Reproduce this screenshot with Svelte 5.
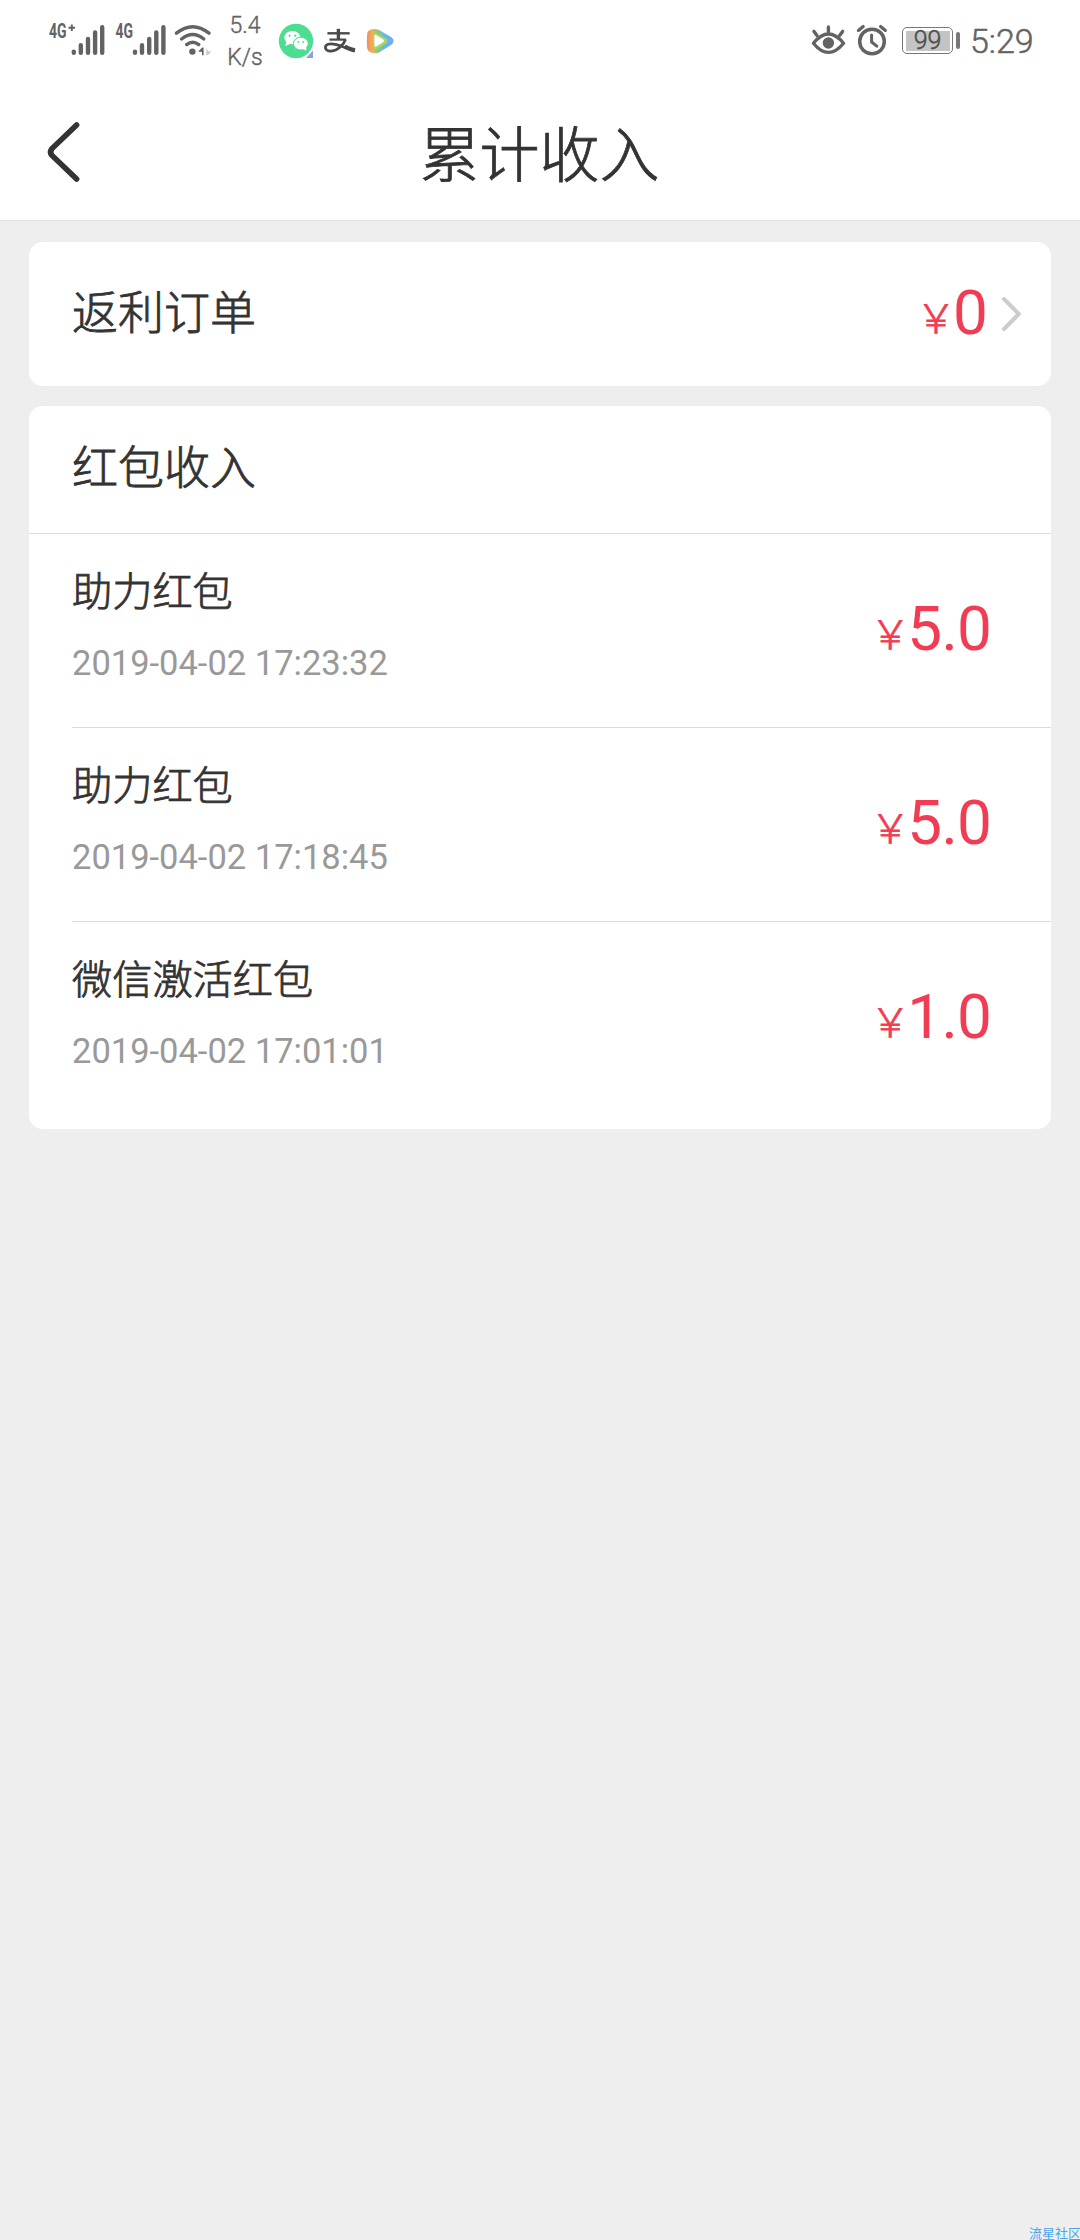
<script>
  const records = [
    { title: '助力红包', time: '2019-04-02 17:23:32', amount: '5.0' },
    { title: '助力红包', time: '2019-04-02 17:18:45', amount: '5.0' },
    { title: '微信激活红包', time: '2019-04-02 17:01:01', amount: '1.0' }
  ];
</script>

<div class="screen">
  <div class="status">
    <svg class="signals" width="166" height="80" viewBox="48 0 166 80">
      <g fill="#636363" class="net">
        <text x="49" y="38" textLength="17.5" lengthAdjust="spacingAndGlyphs">4G</text>
        <text x="115.5" y="38" textLength="17.5" lengthAdjust="spacingAndGlyphs">4G</text>
      </g>
      <path d="M68.5 27.7h6.6M71.8 24.4v6.6" stroke="#636363" stroke-width="2" />
      <g stroke="#636363" stroke-width="4.4" stroke-linecap="round" fill="none">
        <path d="M73.8 51.6v1.2M80.8 45.2v7.6M88 39v13.8M95.1 32.4v20.4M102.2 27.2v25.6" />
        <path d="M135 51.6v1.2M142 45.2v7.6M149.2 39v13.8M156.3 32.4v20.4M163.4 27.2v25.6" />
      </g>
      <g stroke="#636363" stroke-width="3.4" stroke-linecap="round" fill="none">
        <path d="M176.4 33.2Q192.7 20.2 209 33.2" />
        <path d="M181.6 39Q192.7 30 203.8 39" />
        <path d="M186.6 44.6Q192.7 40 198.8 44.6" />
      </g>
      <circle cx="192.4" cy="51.6" r="3.2" fill="#636363" />
      <path d="M198.2 51.5l4-4h1.4v7.8h-1.6v-3.2z" fill="#636363" />
      <path d="M206.4 47.4v7.8l1.6-.2 3.2-3.8-3.2.2z" fill="#c4c4c4" />
    </svg>
    <div class="speed"><span>5.4</span><span>K/s</span></div>
    <svg class="apps" width="120" height="80" viewBox="277 0 120 80">
      <defs>
        <linearGradient id="playEdge" x1="0" y1="0" x2="1" y2="0">
          <stop offset="0" stop-color="#f58b62" />
          <stop offset=".2" stop-color="#efae55" />
          <stop offset=".45" stop-color="#82c985" />
          <stop offset=".65" stop-color="#66b6ee" />
          <stop offset="1" stop-color="#72aaf1" />
        </linearGradient>
      </defs>
      <circle cx="296" cy="41" r="17.2" fill="#4cdd91" />
      <path d="M306 58l7-7.4v7.4z" fill="#8f9fe0" />
      <ellipse cx="292.3" cy="37.6" rx="8" ry="6.7" fill="#fff" />
      <path d="M286.3 41.5l-.9 4.5 4.6-2z" fill="#fff" />
      <ellipse cx="300.8" cy="43.6" rx="7.5" ry="6.4" fill="#fff" stroke="#4cdd91" stroke-width="1" />
      <path d="M302 48.8l4.6 1.7-.8-4z" fill="#fff" />
      <g fill="#4cdd91">
        <circle cx="289.6" cy="35.7" r="1.1" /><circle cx="295.2" cy="35.7" r="1.1" />
        <circle cx="298.5" cy="42" r=".9" /><circle cx="303.2" cy="42" r=".9" />
      </g>
      <g stroke="#4b4b4b" fill="none">
        <path d="M327.4 33.3h22.3" stroke-width="2.4" />
        <path d="M338.4 28.8v11" stroke-width="3.4" />
        <path d="M329.4 39.6h16.4" stroke-width="2.2" />
        <path d="M345.6 39.2C343.6 45 337 51.6 329.8 51.2C324.6 50.6 324 45.8 328 44.2C335 41.8 345 48.4 355 50.6" stroke-width="2.7" />
        <path d="M344.6 46.6Q349.4 49 354.8 50.4" stroke-width="4.4" />
      </g>
      <path d="M371 29.600q4-1.600 8 .4l12.400 7.200q4.400 3.400 0 7.600l-12.400 7.600q-4 1.800-8 .2-3.400-1.400-3.800-4-.8-7.400 0-15 .4-2.800 3.800-4z" fill="url(#playEdge)" />
      <path d="M373 33.200q2-1.400 4.600.2l8.400 5.200q3 2.400 0 4.800l-8.400 5.200q-2.600 1.400-4.600-.2z" fill="#a9d65e" />
      <path d="M374.400 35.600q.4-1.400 2-.6l7 4.600q1.200 1.200 0 2.400l-7 4.400q-1.600.8-2-.6z" fill="#fff" />
    </svg>
    <div class="gap"></div>
    <svg class="indicators" width="86" height="80" viewBox="804 0 86 80">
      <g stroke="#636363" fill="none" stroke-linecap="round">
        <path d="M813.4 43.200Q828.400 24.800 843.600 43.200Q828.400 61.600 813.400 43.200z" stroke-width="3.300" stroke-linejoin="round" />
        <path d="M828.400 27v5M814 31.400l3 4M842.600 31.400l-3 4" stroke-width="3.400" />
        <circle cx="872" cy="41.500" r="12.300" stroke-width="3.500" />
        <path d="M871.600 35v7l5.200 4.200" stroke-width="3" stroke-linejoin="round" />
        <path d="M858.400 30.400l4.800-4M885.400 30.400l-4.800-4" stroke-width="3.200" />
      </g>
      <circle cx="828.400" cy="43" r="5.700" fill="#636363" />
    </svg>
    <div class="battery"><div class="level">99</div></div>
    <div class="nub"></div>
    <div class="clock">5:29</div>
  </div>

  <header>
    <svg class="back" width="40" height="68" viewBox="44 118 40 68">
      <path d="M76.600 125L52 148.600Q49 152 52 155.400L76.600 179" fill="none" stroke="#333" stroke-width="5.600" stroke-linecap="round" />
    </svg>
    <h1>累计收入</h1>
  </header>

  <main>
    <section class="card rebate">
      <h2>返利订单</h2>
      <div class="price"><span class="yen">￥</span><span class="num">0</span></div>
      <svg class="more" width="24" height="40" viewBox="0 0 24 40">
        <path d="M4 5l14.800 15L4 35" fill="none" stroke="#ccc" stroke-width="4" stroke-linecap="round" stroke-linejoin="round" />
      </svg>
    </section>

    <section class="card">
      <div class="heading"><h2>红包收入</h2></div>
      {#each records as record}
        <div class="record">
          <div class="info">
            <div class="title">{record.title}</div>
            <div class="time">{record.time}</div>
          </div>
          <div class="price"><span class="yen">￥</span><span class="num">{record.amount}</span></div>
        </div>
      {/each}
    </section>
  </main>
  <div class="mark">流星社区</div>
</div>

<style>
  :global(body) {
    background: #eee;
  }
  .screen {
    position: relative;
    width: 1080px;
    height: 2240px;
    overflow: hidden;
    background: #eee;
    color: #333;
    font-family: Roboto, 'Noto Sans CJK SC', sans-serif;
  }
  .status {
    display: flex;
    height: 80px;
    box-sizing: border-box;
    padding-left: 48px;
    background: #fff;
    color: #636363;
  }
  svg {
    display: block;
    flex: none;
  }
  .net {
    font: 700 19.500px Roboto, sans-serif;
  }
  .speed {
    width: 63px;
    box-sizing: border-box;
    padding: 10px 1px 0 0;
    display: flex;
    flex-direction: column;
    align-items: center;
    font-size: 23px;
    font-weight: 300;
    line-height: 32px;
    -webkit-text-stroke: 0.400px;
  }
  .gap {
    flex: 1;
  }
  .battery {
    width: 51px;
    height: 27px;
    box-sizing: border-box;
    margin: 27px 3px 0 12px;
    padding: 2.500px;
    border: 1.500px solid #777;
    border-radius: 5px;
  }
  .level {
    height: 100%;
    background: #c4c4c4;
    color: #505050;
    font-size: 25px;
    font-weight: 300;
    line-height: 19px;
    text-align: center;
    -webkit-text-stroke: 0.500px;
  }
  .nub {
    width: 4px;
    height: 17px;
    margin-top: 32px;
    border-radius: 2px;
    background: #777;
  }
  .clock {
    width: 110px;
    margin-left: 10px;
    padding-top: 21px;
    font-size: 34px;
    font-weight: 300;
    line-height: 40px;
    -webkit-text-stroke: 0.500px;
  }
  header {
    display: grid;
    grid-template-columns: 84px 1fr 84px;
    height: 141px;
    box-sizing: border-box;
    border-bottom: 1px solid #e2e2e2;
    background: #fff;
  }
  .back {
    margin: 38px 0 0 44px;
  }
  h1,
  h2,
  .title {
    font-weight: 300;
    -webkit-text-stroke: 0.800px;
  }
  h1 {
    margin: 41px 1px 0 0;
    font-size: 60px;
    line-height: 72px;
    text-align: center;
  }
  h2 {
    margin: 0;
    font-size: 46px;
    line-height: 60px;
  }
  main {
    display: flex;
    flex-direction: column;
    gap: 20px;
    padding: 21px 29px 0;
  }
  .card {
    border-radius: 14px;
    background: #fff;
    overflow: hidden;
  }
  .rebate {
    display: flex;
    height: 144px;
    padding: 0 27px 0 43px;
  }
  .rebate h2 {
    flex: 1;
    padding-top: 41px;
  }
  .rebate .price {
    padding-top: 36px;
  }
  .more {
    margin: 52px 0 0 13px;
  }
  .heading {
    height: 128px;
    box-sizing: border-box;
    padding: 32px 0 0 43px;
    border-bottom: 1px solid #dcdcdc;
  }
  .record {
    display: flex;
    justify-content: space-between;
    height: 194px;
    box-sizing: border-box;
    margin-left: 43px;
    padding-right: 60px;
    border-bottom: 1px solid #dcdcdc;
  }
  .record:last-child {
    height: 207px;
    border-bottom: 0;
  }
  .title {
    padding-top: 33px;
    font-size: 40.200px;
    line-height: 52px;
  }
  .time {
    padding-top: 21px;
    color: #999;
    font-size: 34.500px;
    line-height: 46px;
  }
  .record .price {
    padding-top: 60px;
  }
  .price {
    color: #f13c54;
    line-height: 70px;
    white-space: nowrap;
  }
  .yen {
    margin-right: -3px;
    font-family: 'Noto Sans CJK SC', sans-serif;
    font-size: 40px;
    font-weight: 300;
    line-height: 1;
    vertical-align: 1px;
    -webkit-text-stroke: 0.800px;
  }
  .num {
    font-size: 62px;
    letter-spacing: -0.800px;
  }
  .mark {
    position: absolute;
    left: 1029px;
    top: 2225px;
    color: #4aa5ee;
    font-size: 13px;
    line-height: 18px;
    white-space: nowrap;
  }
</style>
